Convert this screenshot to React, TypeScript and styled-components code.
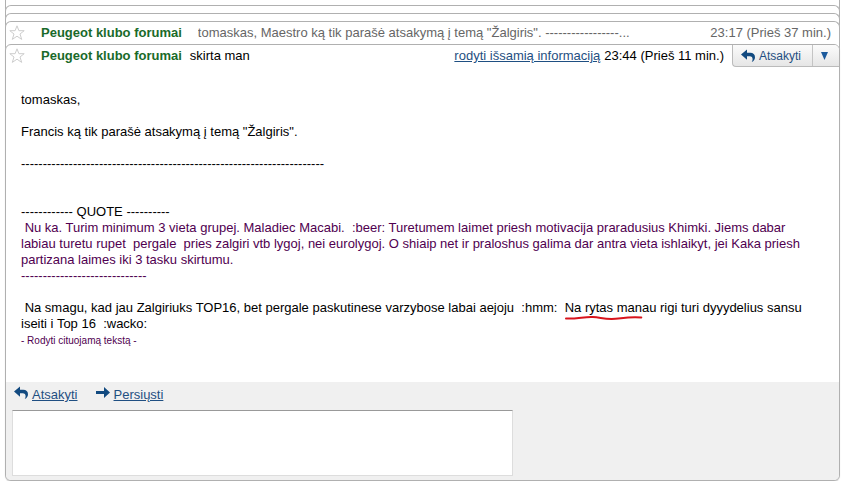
import React from "react";
import styled, { createGlobalStyle } from "styled-components";

const edge = "#b0b0b0";
const linkBlue = "#1f4f82";

const GlobalStyle = createGlobalStyle`
  * { box-sizing: border-box; }
  body {
    margin: 0;
    background: #fff;
    color: #000;
    font-family: "Liberation Sans", Arial, sans-serif;
    font-size: 13px;
    line-height: 16px;
  }
  a { color: ${linkBlue}; }
  button, textarea { font: inherit; }
`;

const Thread = styled.main`
  margin: 0 8px 0 5px;
`;

/* Each card tucks its lower edge under the rounded top of the next one. */
const Card = styled.article<{ $top?: boolean }>`
  margin-bottom: -6px;
  padding-bottom: 6px;
  border: 1px solid ${edge};
  border-top-width: ${(p) => (p.$top ? 0 : 1)}px;
  border-bottom: 0;
  border-radius: ${(p) => (p.$top ? "0" : "6px 6px 0 0")};
  background: #fff;
`;

const FoldedBody = styled.div<{ $height: number }>`
  height: ${(p) => p.$height}px;
`;

const OpenCard = styled.article`
  border: 1px solid ${edge};
  border-radius: 6px;
  background: #fff;
  box-shadow: 0 1px 1px #d8d8d8;
  overflow: hidden;
`;

const Header = styled.header`
  display: flex;
  align-items: center;
  height: 22px;
  padding-left: 3px;
  white-space: nowrap;
`;

const StarButton = styled.button`
  display: flex;
  width: 16px;
  height: 16px;
  margin-right: 16px;
  padding: 0;
  border: 0;
  background: none;
`;

const Sender = styled.strong`
  color: #1a6a2a;
`;

const Snippet = styled.span`
  flex: 1;
  min-width: 0;
  margin-left: 16px;
  overflow: hidden;
  color: #666;
`;

const Recipient = styled.span`
  flex: 1;
  margin-left: 8px;
`;

const Time = styled.time<{ $muted?: boolean }>`
  margin: 0 8px 0 4px;
  color: ${(p) => (p.$muted ? "#666" : "#000")};
`;

const ReplyGroup = styled.div`
  display: flex;
  align-self: stretch;
  width: 107px;
  border: 1px solid #bbb;
  border-width: 0 0 1px 1px;
  border-radius: 0 0 0 4px;
  background: linear-gradient(#fbfbfb, #e6e6e6);
`;

const ReplyButton = styled.button`
  display: flex;
  flex: 1;
  align-items: center;
  gap: 4px;
  padding: 0 0 0 8px;
  border: 0;
  background: none;
  color: ${linkBlue};
  font-size: 12px;
`;

const MoreButton = styled.button`
  display: flex;
  align-items: center;
  justify-content: center;
  width: 27px;
  padding: 0 4px 0 0;
  border: 0;
  border-left: 1px solid #c4c4c4;
  background: none;
`;

const Message = styled.div`
  padding: 25px 16px 32px 15px;
  white-space: pre-wrap;
`;

const Paragraph = styled.p`
  margin: 0 0 16px;
`;

const Quote = styled.blockquote`
  margin: 0 0 16px;
  color: #500050;
`;

const QuoteHead = styled.p`
  margin: 32px 0 0;
`;

const LastParagraph = styled.p`
  margin: 0;
`;

const Marked = styled.span`
  position: relative;
`;

const MarkLine = styled.svg`
  position: absolute;
  left: 0;
  top: 15px;
  width: 100%;
  height: 5px;
  overflow: visible;
`;

const ToggleQuote = styled.button`
  display: block;
  height: 18px;
  padding: 0;
  border: 0;
  background: none;
  color: #500050;
  font-size: 10px;
  line-height: 18px;
`;

const Footer = styled.footer`
  padding: 4px 6px;
  background: #f0f0f0;
`;

const Actions = styled.nav`
  display: flex;
  gap: 18px;
  height: 24px;
  padding-left: 2px;
`;

const Action = styled.div`
  display: flex;
  align-items: flex-start;
  gap: 4px;
`;

const ActionLink = styled.a`
  line-height: 18px;
`;

const ReplyBox = styled.textarea`
  display: block;
  width: 61%;
  min-width: 200px;
  max-width: 502px;
  height: 66px;
  border: 1px solid #ddd;
  border-top-color: #999;
  background: #fff;
  resize: none;
`;

const Star = () => (
  <svg width="16" height="16" viewBox="0 0 16 16" aria-hidden="true">
    <path
      d="M8 .8 9.900 5.700H15.200l-4.200 3.300L12.700 14.400 8 11.200l-4.700 3.200L5 9 .8 5.700h5.300z"
      fill="#fff"
      stroke="#cdcdcd"
      strokeLinejoin="round"
    />
  </svg>
);

const ReplyIcon = () => (
  <svg width="14" height="14" viewBox="0 0 14 14" aria-hidden="true">
    <path
      d="M0 5.500 6 .5v3.300h3.200c3 0 4.800 1.700 4.800 4.400 0 2.200-1.100 3.700-3.200 4.800 .6-1 .8-1.900 .8-2.800 0-1.900-1-2.900-2.900-2.900H6v3.400z"
      fill="#124a80"
    />
  </svg>
);

const ForwardIcon = () => (
  <svg width="14" height="14" viewBox="0 0 14 14" aria-hidden="true">
    <path d="M0 5h8V1l6 5.500L8 12V8H0z" fill="#124a80" />
  </svg>
);

const StarToggle = () => (
  <StarButton type="button" aria-label="Pažymėti žvaigždute">
    <Star />
  </StarButton>
);

export default function App() {
  return (
    <>
      <GlobalStyle />
      <Thread>
        <Card $top>
          <FoldedBody $height={5} />
        </Card>
        <Card>
          <FoldedBody $height={7} />
        </Card>
        <Card>
          <FoldedBody $height={7} />
        </Card>
        <Card>
          <Header>
            <StarToggle />
            <Sender>Peugeot klubo forumai</Sender>
            <Snippet>
              tomaskas, Maestro ką tik parašė atsakymą į temą "Žalgiris". {"-".repeat(17)}...
            </Snippet>
            <Time $muted>23:17 (Prieš 37 min.)</Time>
          </Header>
        </Card>
        <OpenCard>
          <Header>
            <StarToggle />
            <Sender>Peugeot klubo forumai</Sender>
            <Recipient>skirta man</Recipient>
            <a href="#info">rodyti išsamią informaciją</a>
            <Time>23:44 (Prieš 11 min.)</Time>
            <ReplyGroup>
              <ReplyButton type="button">
                <ReplyIcon />
                Atsakyti
              </ReplyButton>
              <MoreButton type="button" aria-label="Daugiau">
                <svg width="7" height="8" viewBox="0 0 7 8" aria-hidden="true">
                  <path d="M0 0h7L3.500 8z" fill="#1c5a9c" />
                </svg>
              </MoreButton>
            </ReplyGroup>
          </Header>
          <Message>
            <Paragraph>tomaskas,</Paragraph>
            <Paragraph>Francis ką tik parašė atsakymą į temą "Žalgiris".</Paragraph>
            <Paragraph>{"-".repeat(70)}</Paragraph>
            <QuoteHead>{"-".repeat(12)} QUOTE {"-".repeat(10)}</QuoteHead>
            <Quote>
              {" Nu ka. Turim minimum 3 vieta grupej. Maladiec Macabi.  :beer: Turetumem laimet priesh motivacija praradusius Khimki. Jiems dabar labiau turetu rupet  pergale  pries zalgiri vtb lygoj, nei eurolygoj. O shiaip net ir praloshus galima dar antra vieta ishlaikyt, jei Kaka priesh partizana laimes iki 3 tasku skirtumu.\n"}
              {"-".repeat(29)}
            </Quote>
            <LastParagraph>
              {" Na smagu, kad jau Zalgiriuks TOP16, bet pergale paskutinese varzybose labai aejoju  :hmm:  "}
              <Marked>
                Na rytas man
                <MarkLine viewBox="0 0 78 5" preserveAspectRatio="none" aria-hidden="true">
                  <path
                    d="M1 3.500C12 4 20 1.500 28 2s10 2 19 2 14-2.500 30-1.500"
                    fill="none"
                    stroke="#d8141c"
                    strokeWidth="2"
                    strokeLinecap="round"
                  />
                </MarkLine>
              </Marked>
              {"au rigi turi dyyydelius sansu iseiti i Top 16  :wacko:"}
            </LastParagraph>
            <ToggleQuote type="button">- Rodyti cituojamą tekstą -</ToggleQuote>
          </Message>
          <Footer>
            <Actions>
              <Action>
                <ReplyIcon />
                <ActionLink href="#reply">Atsakyti</ActionLink>
              </Action>
              <Action>
                <ForwardIcon />
                <ActionLink href="#forward">Persiųsti</ActionLink>
              </Action>
            </Actions>
            <ReplyBox aria-label="Atsakymas" />
          </Footer>
        </OpenCard>
      </Thread>
    </>
  );
}
